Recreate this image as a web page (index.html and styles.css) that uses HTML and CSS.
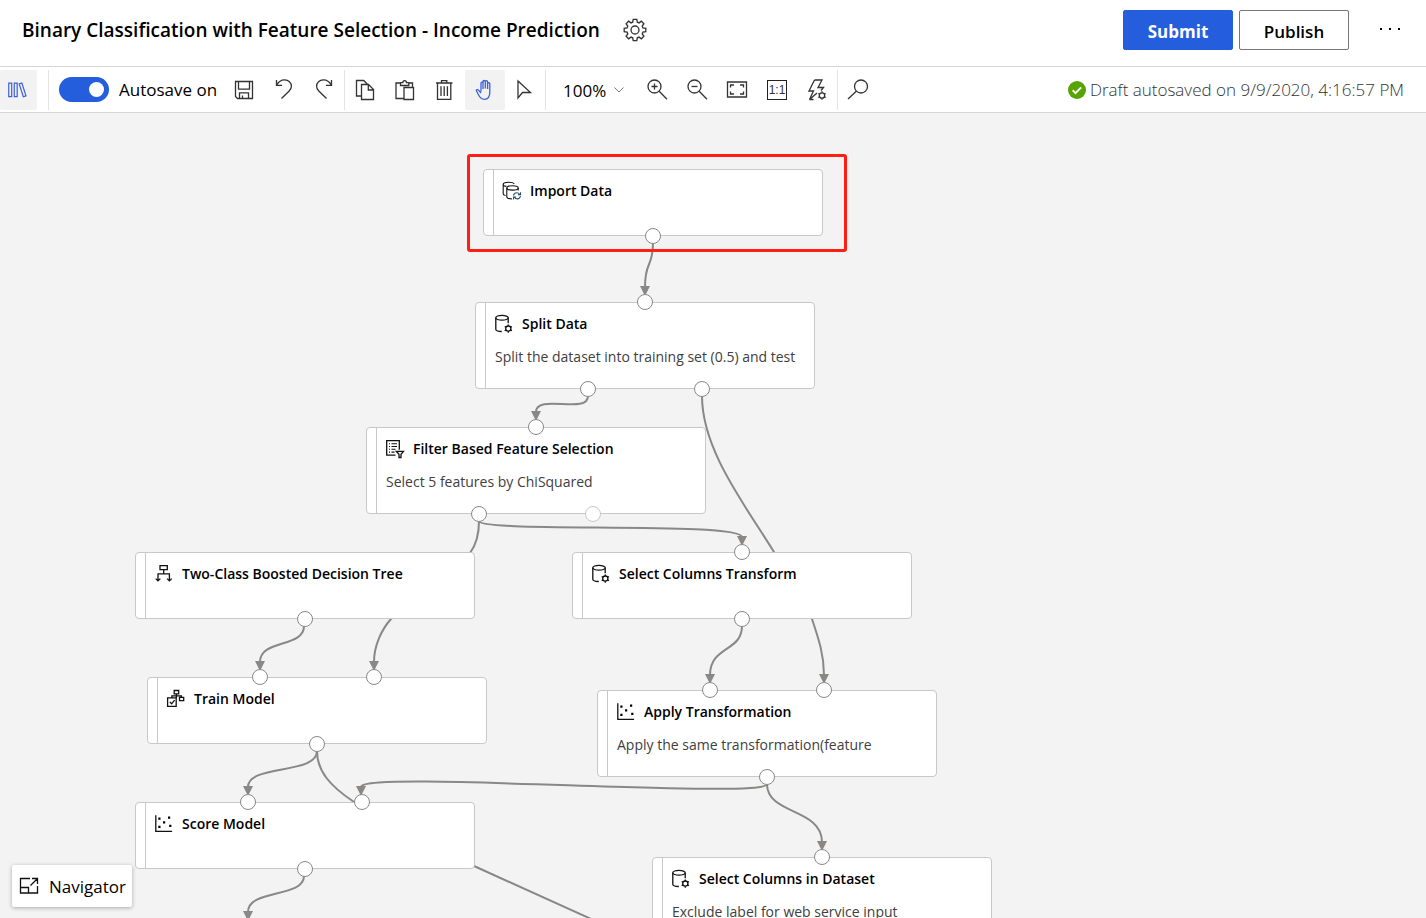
FILE: index.html
```html
<!DOCTYPE html>
<html lang="en">
<head>
<meta charset="utf-8">
<title>Binary Classification with Feature Selection - Income Prediction</title>
<link rel="stylesheet" href="styles.css">
</head>
<body>
<svg class="sprite" aria-hidden="true">
  <symbol id="cog" viewBox="0 0 24 24">
    <path d="M10.2 1.3h3.6l.5 2.9 1.7.7 2.4-1.7 2.500 2.500-1.700 2.400.7 1.700 2.900.5v3.400l-2.900.5-.7 1.700 1.700 2.400-2.500 2.500-2.400-1.700-1.700.7-.5 2.900h-3.600l-.5-2.900-1.700-.7-2.400 1.700-2.500-2.500 1.700-2.400-.7-1.700-2.900-.5v-3.400l2.900-.5.7-1.700-1.700-2.400 2.500-2.500 2.400 1.700 1.700-.7z"/><circle cx="12" cy="12" r="4"/>
  </symbol>
  <symbol id="data-gear" viewBox="0 0 20 20">
    <ellipse cx="8" cy="3.8" rx="6.2" ry="2.4"/><path d="M1.8 3.8v11.400c0 1.200 2.400 2.200 6 2.300M14.200 3.800v5.500"/>
    <circle cx="14.300" cy="14.600" r="2.600"/><path d="M14.300 10.400v1.500M14.300 17.300v1.500M10.700 12.500l1.300.8M16.600 15.900l1.300.8M10.700 16.700l1.300-.8M16.600 13.300l1.300-.8"/>
  </symbol>
  <symbol id="data-sync" viewBox="0 0 20 20">
    <g stroke-width="1.100"><path d="M1.200 3.400C1.200 2 3.500 1.300 6.500 1.300s5.200.8 5.700 1.800M1.200 3.400v9.300c0 1 1.200 1.600 2.400 1.800M1.200 3.400c0 1 1.300 1.700 3.200 2"/><ellipse cx="10.500" cy="6.900" rx="5.700" ry="2.200"/><path d="M4.800 6.900v8.800c0 1.200 2 2.100 5.200 2.300M16.200 6.900v2.500"/><path stroke="#24506e" d="M11.500 14.500c.4-1.700 1.600-2.700 3.200-2.700 1.300 0 2.300.6 2.900 1.600M18.500 11.200v2.500H16M18.500 15.200c-.4 1.700-1.600 2.700-3.200 2.700-1.300 0-2.300-.6-2.900-1.600M11.500 18.500V16H14"/></g>
  </symbol>
  <symbol id="filter" viewBox="0 0 20 20">
    <path d="M10.500 16.200H1.700V1.700h12.600v9"/><path stroke-width="1.100" d="M4 4.700h1M6.500 4.700h5.500M4 7.500h1M6.500 7.500h5.500M4 10.300h1M6.500 10.300h4M4 13.100h1M6.500 13.100h3"/><path d="M11.300 12.300h7.200l-2.500 3v3.200h-2v-3.200z"/>
  </symbol>
  <symbol id="tree" viewBox="0 0 20 20">
    <path d="M6 1.700h7.300v4H6zM9.700 5.700v4.200M4 16.500V9.900h11.400v6.600M1.700 14.600 4 16.900l2.300-2.300M13.100 14.600l2.300 2.300 2.300-2.300"/>
  </symbol>
  <symbol id="train" viewBox="0 0 20 20">
    <path d="M1.600 8.800h8.600v8.600H1.600zM3.800 12.900l1.800 1.900 3-3.700M8.200 1.500h4.500v3.400H8.200zM13.500 8.300h4.200v3.300h-4.200zM10.400 4.900v4M5.900 8.600V6.900h9.500v1.400"/>
  </symbol>
  <symbol id="scatter" viewBox="0 0 20 20">
    <path d="M1.800 1.200v16.100h16.300"/><path class="solid" d="M4.300 3.500h2.200v2.200H4.300zM9 7.200h2.200v2.200H9zM14 2.500h2.200v2.200H14zM4.300 11.800h2.200V14H4.300zM15.200 10.800h2.200V13h-2.200z"/>
  </symbol>
  <symbol id="loupe" viewBox="0 0 24 24"><circle cx="9.500" cy="8.500" r="6.500"/><path d="m14.200 13.200 7.800 8"/></symbol>
</svg>

<div class="app">
  <header class="header">
    <h1 class="title">Binary Classification with Feature Selection - Income Prediction</h1>
    <button class="icon-button" aria-label="Settings"><svg class="icon"><use href="#cog"/></svg></button>
    <div class="actions">
      <button class="button primary">Submit</button>
      <button class="button">Publish</button>
      <button class="icon-button more" aria-label="More"><svg class="icon" viewBox="0 0 24 24"><path class="solid" d="M1 10h2v2H1zM10 10h2v2h-2zM19 10h2v2h-2z"/></svg></button>
    </div>
  </header>

  <div class="toolbar" role="toolbar">
    <div class="group first">
      <button class="tool library active" aria-label="Asset library"><svg class="icon" viewBox="0 0 24 24"><path d="M3 4.500h3.200v14.700H3zM9 4.500h3.200v14.700H9zM14.400 5.300l2.900-.9 4.500 13.900-2.900 1z"/></svg></button>
    </div>
    <div class="group autosave">
      <label class="toggle"><input type="checkbox" class="switch" checked>Autosave on</label>
      <button class="tool" aria-label="Save"><svg class="icon" viewBox="0 0 24 24"><path d="M3.500 3.500h17v17H5.500l-2-2zM6.500 3.700v7.500h11V3.700M7.500 20.500v-5.700h9v5.700M10.500 20.500V17.500"/></svg></button>
      <button class="tool" aria-label="Undo"><svg class="icon" viewBox="0 0 24 24"><path d="M4.500 2v5.300H10M4.700 7c2-3.600 5-5.300 8-5.200 3.800.1 6.700 3 6.700 6.500 0 2-.9 3.400-2.200 4.700l-7.700 7.500"/></svg></button>
      <button class="tool" aria-label="Redo"><svg class="icon" viewBox="0 0 24 24"><path d="M19.500 2v5.300H14M19.300 7c-2-3.600-5-5.300-8-5.200-3.800.1-6.700 3-6.700 6.500 0 2 .9 3.400 2.200 4.700l7.700 7.500"/></svg></button>
    </div>
    <div class="group">
      <button class="tool" aria-label="Copy"><svg class="icon" viewBox="0 0 24 24"><path d="M8.500 18H3.500V2.500h7.200l4 4M8.500 6.500h7l5 5v10h-12zM15.300 6.700V12h5"/></svg></button>
      <button class="tool" aria-label="Paste"><svg class="icon" viewBox="0 0 24 24"><path d="M11 20.500H3V5h4.500M15.500 5h4v4M7.500 7.500V4.700h2.300C9.800 1.800 13.500 1.800 13.500 4.700h2.300v2.800zM11 9.500h9.500v12H11z"/></svg></button>
      <button class="tool" aria-label="Delete"><svg class="icon" viewBox="0 0 24 24"><path d="M3 5h16.500M8.500 5V2.700h5.300V5M4.500 5v16.300h13.300V5M8 8.300v9.700M11.200 8.300v9.700M14.400 8.300v9.700"/></svg></button>
      <button class="tool active hand" aria-label="Pan"><svg class="icon" viewBox="0 0 24 24"><path d="M8 13.500V5.200c0-1.500 2-1.500 2 0V11M10 10V3.700c0-1.600 2.300-1.600 2.300 0V10.500M12.300 10V3.900c0-1.600 2.300-1.600 2.300 0V11M14.600 10.500V5.700c0-1.400 2.200-1.400 2.200 0V14c0 4-1.500 7.300-5.300 7.300-3.300 0-4.600-1.800-5.900-4.300l-2.100-4c-.6-1.300 1.100-1.900 2-.8L8 15"/></svg></button>
      <button class="tool" aria-label="Select"><svg class="icon" viewBox="0 0 24 24"><path d="M5 3v17l4.500-5.500h8z"/></svg></button>
    </div>
    <div class="group zoom">
      <select class="zoom-level" aria-label="Zoom level"><option>100%</option></select>
      <button class="tool" aria-label="Zoom in"><svg class="icon" viewBox="0 0 24 24"><use href="#loupe"/><path d="M6.500 8.500h6M9.500 5.500v6"/></svg></button>
      <button class="tool" aria-label="Zoom out"><svg class="icon" viewBox="0 0 24 24"><use href="#loupe"/><path d="M6.500 8.500h6"/></svg></button>
      <button class="tool" aria-label="Zoom to fit"><svg class="icon" viewBox="0 0 24 24"><path d="M2.500 4h19v15h-19zM5.500 9.500V7h3.500M15 7h3.500v2.500M18.500 13.500V16H15M9 16H5.500v-2.500"/></svg></button>
      <button class="tool" aria-label="Actual size"><span class="actual">1:1</span></button>
      <button class="tool" aria-label="Auto layout"><svg class="icon" viewBox="0 0 24 24"><path d="M9.500 2h7.500l-4 7.500h5.500l-2.500 3M9.500 2 4 13h4.500L4.500 21.500 12 15M4.500 21.500h4"/><circle cx="17" cy="17.500" r="2.700"/><path d="M17 13.300v1.500M17 20.200v1.500M13.400 15.400l1.300.8M19.300 18.800l1.300.8M13.400 19.600l1.300-.8M19.300 16.200l1.300-.8"/></svg></button>
    </div>
    <div class="group last">
      <button class="tool search" aria-label="Search"><svg class="icon" viewBox="0 0 24 24"><circle cx="15" cy="8.500" r="6.500"/><path d="M10.300 13.200 2 21"/></svg></button>
    </div>
    <p class="status"><svg class="check" viewBox="0 0 18 18"><circle cx="9" cy="9" r="9"/><path d="m4.700 9.300 2.800 2.800 5.700-5.700"/></svg>Draft autosaved on 9/9/2020, 4:16:57 PM</p>
  </div>

  <main class="canvas">
    <svg class="edges" aria-hidden="true">
      <defs><marker id="arrow" markerUnits="userSpaceOnUse" markerWidth="10" markerHeight="10" refX="5" refY="1"><path d="M0 0h10L5 10z"/></marker></defs>
      <path marker-end="url(#arrow)" d="M653 130C653 155 645 147 645 174"/>
      <path marker-end="url(#arrow)" d="M588 283C588 302 536 280 536 299"/>
      <path marker-end="url(#arrow)" d="M702 283C702 337 745 392 774 439L812 506C819 527 824 542 824 562"/>
      <path marker-end="url(#arrow)" d="M479 408C479 423 476 432 470 440L391 506C382 516 374 532 374 549"/>
      <path marker-end="url(#arrow)" d="M479 408C479 420 742 408 742 424"/>
      <path marker-end="url(#arrow)" d="M304 513C304 535 260 526 260 549"/>
      <path marker-end="url(#arrow)" d="M742 513C742 539 710 533 710 562"/>
      <path marker-end="url(#arrow)" d="M317 638C317 662 248 651 248 674"/>
      <path d="M317 638C317 658 330 673 354 689C400 722 430 732 474 753L600 810"/>
      <path marker-end="url(#arrow)" d="M767 671C767 687 361 657 361 674"/>
      <path marker-end="url(#arrow)" d="M767 671C767 702 822 695 822 729"/>
      <path marker-end="url(#arrow)" d="M304 763C304 785 248 776 248 799"/>
    </svg>

    <article class="node import">
      <h2 class="name"><svg class="glyph"><use href="#data-sync"/></svg>Import Data</h2>
      <div class="ports out"><i class="port"></i></div>
    </article>
    <article class="node split">
      <div class="ports in"><i class="port"></i></div>
      <h2 class="name"><svg class="glyph"><use href="#data-gear"/></svg>Split Data</h2>
      <p class="note">Split the dataset into training set (0.5) and test</p>
      <div class="ports out"><i class="port"></i><i class="port"></i></div>
    </article>
    <article class="node feature">
      <div class="ports in"><i class="port"></i></div>
      <h2 class="name"><svg class="glyph"><use href="#filter"/></svg>Filter Based Feature Selection</h2>
      <p class="note">Select 5 features by ChiSquared</p>
      <div class="ports out"><i class="port"></i><i class="port idle"></i></div>
    </article>
    <article class="node boosted">
      <h2 class="name"><svg class="glyph"><use href="#tree"/></svg>Two-Class Boosted Decision Tree</h2>
      <div class="ports out"><i class="port"></i></div>
    </article>
    <article class="node columns">
      <div class="ports in"><i class="port"></i></div>
      <h2 class="name"><svg class="glyph"><use href="#data-gear"/></svg>Select Columns Transform</h2>
      <div class="ports out"><i class="port"></i></div>
    </article>
    <article class="node training">
      <div class="ports in"><i class="port"></i><i class="port"></i></div>
      <h2 class="name"><svg class="glyph"><use href="#train"/></svg>Train Model</h2>
      <div class="ports out"><i class="port"></i></div>
    </article>
    <article class="node apply">
      <div class="ports in"><i class="port"></i><i class="port"></i></div>
      <h2 class="name"><svg class="glyph"><use href="#scatter"/></svg>Apply Transformation</h2>
      <p class="note">Apply the same transformation(feature</p>
      <div class="ports out"><i class="port"></i></div>
    </article>
    <article class="node score">
      <div class="ports in"><i class="port"></i><i class="port"></i></div>
      <h2 class="name"><svg class="glyph"><use href="#scatter"/></svg>Score Model</h2>
      <div class="ports out"><i class="port"></i></div>
    </article>
    <article class="node dataset">
      <div class="ports in"><i class="port"></i></div>
      <h2 class="name"><svg class="glyph"><use href="#data-gear"/></svg>Select Columns in Dataset</h2>
      <p class="note">Exclude label for web service input</p>
    </article>
    <div class="highlight"></div>

    <button class="navigator"><svg class="glyph" viewBox="0 0 20 20"><path d="M11 2.500H1.500v14.500h17V10M13 2.500h5.500V8M18.300 2.700 11.500 9.500M1.500 11.500h8v5.500"/></svg>Navigator</button>
  </main>
</div>
</body>
</html>
```
FILE: styles.css
```css
* { box-sizing: border-box; }

body {
  margin: 0;
  font-family: "Open Sans", "Noto Sans", sans-serif;
  color: #000;
  background: #fff;
}

button, select, input { font: inherit; color: inherit; margin: 0; }
button { border: 0; background: none; padding: 0; cursor: pointer; }
h1, h2, p { margin: 0; }

.sprite { position: absolute; width: 0; height: 0; }

.app { display: flex; flex-direction: column; height: 100vh; overflow: hidden; }

.icon { display: block; width: 24px; height: 24px; fill: none; stroke: #333; stroke-width: 1.3; }
.solid { fill: currentColor; stroke: none; }

.header {
  display: flex;
  align-items: center;
  gap: 23px;
  flex: none;
  height: 67px;
  padding: 0 23px 6px 22px;
  border-bottom: 1px solid #d6d6d6;
}
.title { font-size: 19px; line-height: 26px; font-weight: 600; white-space: nowrap; }
.icon-button { flex: none; }
.actions { display: flex; align-items: center; gap: 6px; margin-left: auto; }
.button {
  min-width: 110px;
  height: 40px;
  padding: 2px 22px 0;
  border: 1px solid #767676;
  border-radius: 2px;
  font-size: 17px;
  font-weight: 600;
}
.primary { background: #245edc; border-color: #245edc; color: #fff; font-weight: 700; }
.more { margin-left: 24px; }

.toolbar {
  display: flex;
  align-items: center;
  flex: none;
  height: 46px;
  padding-right: 22px;
  border-bottom: 1px solid #d6d6d6;
}
.group { display: flex; align-items: center; height: 40px; border-right: 1px solid #e3e3e3; }
.first { padding-right: 11px; }
.last { border-right: 0; }
.tool { display: grid; place-items: center; width: 40px; height: 40px; border-radius: 2px; }
.active { background: #f2f2f2; }
.active .icon { stroke: #3a5fdc; }
.library { width: 37px; padding-right: 3px; }
.library .icon { width: 22px; height: 22px; }
.autosave { padding-left: 10px; }
.toggle { display: flex; align-items: center; gap: 10px; width: 165px; font-size: 17px; white-space: nowrap; }
.switch {
  appearance: none;
  display: flex;
  align-items: center;
  justify-content: flex-end;
  flex: none;
  width: 50px;
  height: 25px;
  padding: 5px;
  border-radius: 13px;
  background: #245edc;
}
.switch::before { content: ""; width: 15px; height: 15px; border-radius: 50%; background: #fff; }
.zoom-level {
  appearance: none;
  width: 91px;
  height: 40px;
  padding: 2px 24px 0 17px;
  border: 0;
  font-size: 17px;
  background: url("data:image/svg+xml,%3Csvg xmlns='http://www.w3.org/2000/svg' viewBox='0 0 10 6'%3E%3Cpath d='M.5.5 5 5 9.500.5' fill='none' stroke='%23777'/%3E%3C/svg%3E") no-repeat 68px 17px / 10px 6px;
}
.actual {
  width: 20px;
  height: 20px;
  border: 1px solid #222;
  font: 12px/18px "Liberation Sans", sans-serif;
  color: #333;
}
.status { display: flex; align-items: center; gap: 4px; margin-left: auto; font-size: 17px; font-weight: 300; color: #333; white-space: nowrap; }
.check { width: 18px; height: 18px; fill: #57a300; }
.check path { fill: none; stroke: #fff; stroke-width: 2; }

.canvas { position: relative; flex: 1; overflow: hidden; background: #f3f3f3; }
.edges { position: absolute; inset: 0; width: 100%; height: 100%; fill: none; stroke: #8a8886; stroke-width: 2; }
.edges marker path { fill: #8a8886; stroke: none; }

.node {
  position: absolute;
  width: 340px;
  min-height: 67px;
  padding: 10px 8px 9px 19px;
  border: 1px solid #c8c8c8;
  border-radius: 4px;
  background: linear-gradient(90deg, #fff 9px, #c8c8c8 9px, #c8c8c8 10px, #fff 10px);
}
.name { display: flex; align-items: center; gap: 8px; font-size: 14px; line-height: 22px; font-weight: 600; white-space: nowrap; }
.glyph { flex: none; width: 20px; height: 20px; fill: none; stroke: #111; stroke-width: 1.3; }
.name .glyph { margin-left: -1px; }
.note { margin-top: 11px; padding-bottom: 11px; font-size: 14px; line-height: 22px; color: #404040; white-space: nowrap; }

.ports { position: absolute; left: -1px; right: -1px; display: flex; padding: 0 calc(100% / 6); }
.in { top: -9px; }
.out { bottom: -9px; }
.port { flex: 1; display: flex; justify-content: center; }
.port::before { content: ""; width: 14px; height: 14px; border: 1px solid #8a8886; border-radius: 50%; background: #fff; }
.idle::before { border-color: #c8c8c8; }

.import { left: 483px; top: 56px; }
.split { left: 475px; top: 189px; }
.feature { left: 366px; top: 314px; }
.boosted { left: 135px; top: 439px; }
.columns { left: 572px; top: 439px; }
.training { left: 147px; top: 564px; }
.apply { left: 597px; top: 577px; }
.score { left: 135px; top: 689px; }
.dataset { left: 652px; top: 744px; }

.highlight {
  position: absolute;
  left: 467px;
  top: 41px;
  width: 380px;
  height: 98px;
  border: 3px solid #ff1f14;
  border-radius: 3px;
}

.navigator {
  position: absolute;
  left: 12px;
  bottom: 11px;
  display: flex;
  align-items: center;
  gap: 10px;
  height: 42px;
  padding: 0 6px 0 7px;
  border-radius: 2px;
  background: #fff;
  box-shadow: 0 1px 4px rgba(0, 0, 0, 0.3);
  font-size: 17px;
}
```
